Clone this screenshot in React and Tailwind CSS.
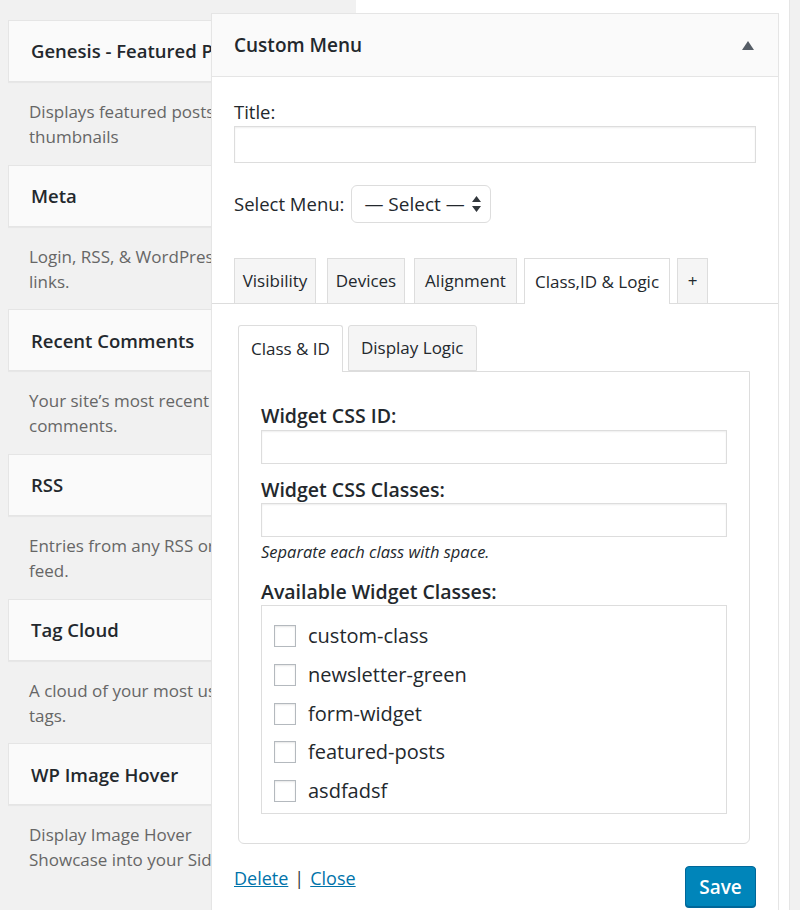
import React from 'react'

const widgets = [
  { title: 'Genesis - Featured Posts', desc: ['Displays featured posts with', 'thumbnails'] },
  { title: 'Meta', desc: ['Login, RSS, & WordPress.org', 'links.'] },
  { title: 'Recent Comments', desc: ['Your site\u2019s most recent', 'comments.'] },
  { title: 'RSS', desc: ['Entries from any RSS or Atom', 'feed.'] },
  { title: 'Tag Cloud', desc: ['A cloud of your most used', 'tags.'] },
  { title: 'WP Image Hover', desc: ['Display Image Hover', 'Showcase into your Sidebar'] },
]

const classes = ['custom-class', 'newsletter-green', 'form-widget', 'featured-posts', 'asdfadsf']

// only the part left of the open panel is visible, so clip there
function WidgetItem({ title, desc }) {
  return (
    <div className="h-[144.7px] w-[203px] overflow-hidden">
      <div className="flex h-[62px] w-[340px] items-center border border-[#e5e5e5] bg-[#fafafa] px-[22px] text-[18.5px] font-semibold text-[#23282d] shadow-[0_1px_1px_rgba(0,0,0,0.04)] whitespace-nowrap">
        {title}
      </div>
      <div className="pt-[17px] pl-[21px] text-[17px] leading-[25px] text-[#666]">
        {desc.map((d) => (
          <div key={d} className="whitespace-nowrap">{d}</div>
        ))}
      </div>
    </div>
  )
}

function App() {
  return (
    <div className="relative flex h-[910px] w-[800px] overflow-hidden bg-[#f1f1f1] font-['Open_Sans',sans-serif] text-[#23282d]">
      {/* available widgets */}
      <div className="w-[356px] shrink-0 overflow-hidden pt-[20px] pl-2">
        {widgets.map((w) => (
          <WidgetItem key={w.title} {...w} />
        ))}
      </div>
      <div className="h-full w-[434px] shrink-0 border-r border-[#e5e5e5] bg-white" />

      {/* widget being edited */}
      <div className="absolute left-[211px] top-[13px] w-[568px] border border-[#e5e5e5] bg-white shadow-[0_1px_1px_rgba(0,0,0,0.04)]">
        <div className="flex h-[63px] items-center justify-between border-b border-[#e5e5e5] bg-[#fafafa] pl-[22px] pr-[24px]">
          <span className="text-[19px] font-semibold">Custom Menu</span>
          <svg width="12" height="9" viewBox="0 0 12 9">
            <path d="M6 0 L12 9 L0 9 Z" fill="#555d66" />
          </svg>
        </div>

        <div className="px-[22px] pt-[23px]">
          <div className="text-[18.5px] leading-[24px]">Title:</div>
          <div className="mt-[2px] h-[37px] border border-[#ddd] shadow-[inset_0_1px_2px_rgba(0,0,0,0.07)]" />

          <div className="mt-[22px] flex items-center gap-[7px]">
            <span className="text-[18.5px]">Select Menu:</span>
            <div className="flex h-[38px] w-[140px] items-center justify-between rounded-[6px] border border-[#ddd] pl-[12px] pr-[9px] text-[19px]">
              <span>— Select —</span>
              <svg width="9" height="16" viewBox="0 0 9 16">
                <path d="M4.5 0 L9 6 L0 6 Z M4.5 16 L9 10 L0 10 Z" fill="#32373c" />
              </svg>
            </div>
          </div>
        </div>

        {/* main tabs */}
        <div className="mt-[35px] flex border-b border-[#ddd] px-[22px] text-[17px]">
          <div className="flex h-[45px] w-[82px] items-center justify-center border border-b-0 border-[#ddd] bg-[#f5f5f5]">Visibility</div>
          <div className="ml-[11px] flex h-[45px] w-[78px] items-center justify-center border border-b-0 border-[#ddd] bg-[#f5f5f5]">Devices</div>
          <div className="ml-[9px] flex h-[45px] w-[103px] items-center justify-center border border-b-0 border-[#ddd] bg-[#f5f5f5]">Alignment</div>
          <div className="-mb-px ml-[7px] flex h-[46px] w-[146px] items-center justify-center border border-b-0 border-[#ddd] bg-white">
            Class,ID &amp; Logic
          </div>
          <div className="ml-[7px] flex h-[45px] w-[31px] items-center justify-center border border-b-0 border-[#ddd] bg-[#f5f5f5]">+</div>
        </div>

        <div className="px-[22px] pt-[21px] pb-[40px]">
          <div className="ml-1 mr-[6px]">
            {/* inner tabs */}
            <div className="flex gap-[5px] text-[17px]">
              <div className="relative z-10 -mb-px flex h-[47px] items-center rounded-t-[3px] border border-b-0 border-[#ddd] bg-white px-[12px]">
                Class &amp; ID
              </div>
              <div className="flex h-[46px] items-center rounded-t-[3px] border border-[#ddd] bg-[#f5f5f5] px-[12px]">
                Display Logic
              </div>
            </div>

            <div className="rounded-b-[6px] border border-[#ddd] px-[22px] pt-[32px] pb-[29px]">
              <div className="text-[19.5px] font-semibold leading-[24px]">Widget CSS ID:</div>
              <div className="mt-[2px] h-[34px] border border-[#ddd] shadow-[inset_0_1px_2px_rgba(0,0,0,0.07)]" />
              <div className="mt-[14px] text-[19.5px] font-semibold leading-[24px]">Widget CSS Classes:</div>
              <div className="mt-[1px] h-[34px] border border-[#ddd] shadow-[inset_0_1px_2px_rgba(0,0,0,0.07)]" />
              <div className="mt-[4px] text-[16.5px] italic leading-[22px]">Separate each class with space.</div>
              <div className="mt-[17px] text-[19.5px] font-semibold leading-[24px]">Available Widget Classes:</div>
              <div className="mt-px border border-[#ddd] px-[12px] pt-[11px] pb-[3px]">
                {classes.map((c) => (
                  <div key={c} className="flex h-[38.7px] items-center gap-[12px]">
                    <div className="h-[22px] w-[22px] border border-[#b4b9be] bg-white shadow-[inset_0_1px_2px_rgba(0,0,0,0.1)]" />
                    <span className="text-[20px]">{c}</span>
                  </div>
                ))}
              </div>
            </div>
          </div>

          <div className="mt-[22px] flex items-start justify-between">
            <div className="text-[18px] leading-[24px]">
              <a href="#" className="text-[#0073aa] underline">Delete</a>
              <span className="mx-[6px] text-[#32373c]">|</span>
              <a href="#" className="text-[#0073aa] underline">Close</a>
            </div>
            <button className="h-[41px] w-[71px] rounded-[4px] border border-[#006799] bg-[#0085ba] text-[19px] font-semibold text-white shadow-[0_1px_0_#006799]">
              Save
            </button>
          </div>
        </div>
      </div>
    </div>
  )
}

export default App
